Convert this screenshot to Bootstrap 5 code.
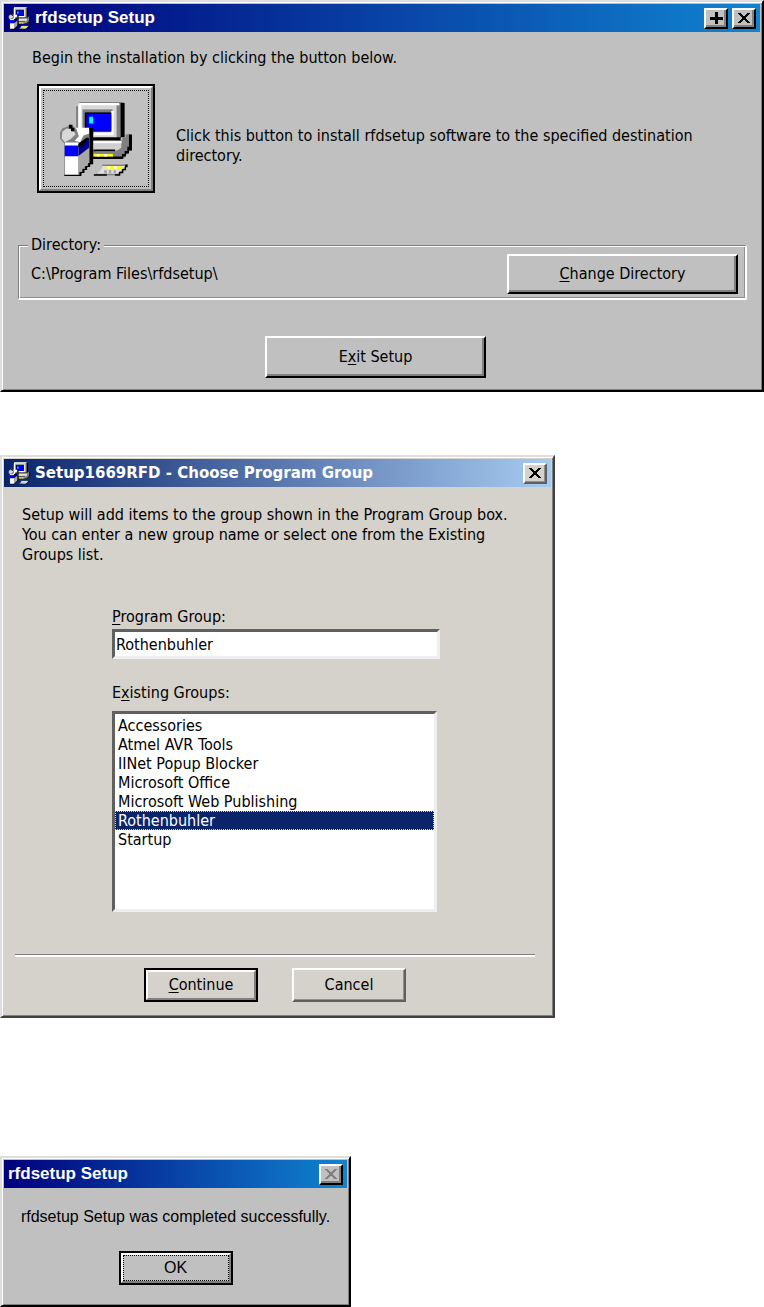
<!DOCTYPE html>
<html lang="en">
<head>
<meta charset="utf-8">
<meta name="viewport" content="width=device-width, initial-scale=1">
<title>rfdsetup Setup</title>
<link rel="stylesheet" href="https://cdn.jsdelivr.net/npm/bootstrap@5.3.0/dist/css/bootstrap.min.css">
<style>
  body { background: #fff; color: #000; font: 16px/20px "DejaVu Sans Condensed", "DejaVu Sans", sans-serif; }
  .dialog { background: var(--face); border: 2px solid; border-color: #dedede var(--dark) var(--dark) #dedede; box-shadow: inset 1px 1px #fff, inset -1px -1px #808080; padding: 2px; }
  .classic { --face: #c0c0c0; --dark: #000; --from: #00007b; --to: #1084d0; }
  .modern { --face: #d5d1cb; --dark: #404040; --from: #0a246a; --to: #a6caf0; max-width: 555px; margin-top: 63px; }
  .message { max-width: 351px; margin-top: 138px; font-family: "Liberation Sans", Arial, sans-serif; }
  .titlebar { height: 28px; background: linear-gradient(90deg, var(--from), var(--to)); color: #fff; padding: 0 4px; }
  .titlebar h1, .titlebar h2 { font: bold 17px/20px "Liberation Sans", Arial, sans-serif; margin: 0; }
  .modern .titlebar h2 { font: bold 15px/20px "DejaVu Sans", sans-serif; }
  .titlebar svg { display: block; }
  .push { background: var(--face); color: #000; border: 2px solid; border-color: #fff var(--dark) var(--dark) #fff; border-radius: 0; box-shadow: inset -2px -2px #808080; padding: 0; font: inherit; }
  .push:active { border-color: #000 #fff #fff #000; }
  .push:disabled { color: #808080; }
  .modern .push { border-color: #fff #606060 #606060 #fff; box-shadow: inset -1px -1px #909090; }
  .push.default, .modern .push.default { outline: 2px solid #000; outline-offset: -2px; border-width: 4px; border-color: #fff #808080 #808080 #fff; box-shadow: none; }
  .caption-btn { width: 24px; height: 21px; }
  .caption-btn svg { margin: auto; }
  .install-btn { width: 118px; height: 109px; padding: 2px; }
  .focus-box { border: 1px dotted #000; display: flex; align-items: center; justify-content: center; height: 100%; }
  .setup-body { padding: 16px 13px 10px 14px; }
  .setup-body > p { padding-left: 14px; }
  .install-row { gap: 21px; padding-left: 19px; margin-bottom: 42px; }
  .install-row p { padding-top: 14px; }
  .group-frame { border: solid; border-width: 1px 2px 2px 1px; border-color: #808080 #fff #fff #808080; box-shadow: inset 1px 1px #fff, inset -1px -1px #909090; padding: 0 7px 4px 12px; margin: 0; min-width: 0; }
  .group-frame legend { float: none; width: auto; font: inherit; margin: 0 0 -1px -3px; padding: 0 3px; background: var(--face); }
  .wide-btn { height: 40px; width: 231px; }
  .exit-btn { height: 42px; width: 221px; }
  .exit-row { padding: 36px 14px 0 0; }
  .small-btn { width: 114px; height: 34px; }
  .sunken { border: 3px solid; border-color: #606060 #eee #eee #606060; border-radius: 0; background: #fff; color: #000; font: inherit; }
  .group-body { padding: 18px 16px 12px 11px; }
  .group-body p { padding-left: 7px; margin-bottom: 42px; }
  .fields { padding-left: 97px; margin-bottom: 42px; }
  .fields label { padding-bottom: 2px; }
  .group-name { height: 30px; padding: 0 1px; width: 328px; max-width: 100%; }
  .group-list { height: 201px; width: 325px; max-width: 100%; padding: 2px 0 0; margin-top: 6px; overflow: hidden; outline: 0; }
  .group-list option { height: 19px; min-height: 0; line-height: 19px; padding: 0 3px; }
  .group-list option:checked { background: #0a246a linear-gradient(#0a246a, #0a246a); color: #fff; -webkit-text-fill-color: #fff; outline: 1px dotted #e0d890; outline-offset: -1px; }
  .rule { border-top: 1px solid #808080; border-bottom: 2px solid #fff; }
  .actions { gap: 34px; padding-top: 11px; }
  .message-body { padding: 19px 0 18px; }
  u { text-underline-offset: 2px; }
</style>
</head>
<body>
<svg class="d-none" aria-hidden="true">
  <symbol id="setup" viewBox="170 295 230 230">
    <path fill="#808080" d="M224 314h10v-13h132v16h-10v108h-14v-10H224z"/>
    <path fill="#d8d8d8" d="M230 306h124v103H230z"/>
    <path fill="#fff" d="M234 304h118v7H240v93h-9v-93z"/>
    <path fill="#808080" d="M345 311h14v96h-14z"/>
    <path fill="#000" d="M357 304h12v102h-12v10H270v-10h87z"/>
    <path fill="#808080" d="M243 323h90v74h-90z"/>
    <path fill="#fff" d="M329 328h7v72h-60v-9h53z"/>
    <path fill="#000" d="M250 332h79v57h-79z"/>
    <path fill="#00f" d="M255 336h74v51h-74z"/>
    <path fill="#0ff" d="M263 345h12v20h-12z"/>
    <path fill="#808080" d="M350 416h12v-10h10v-9h16v44l-20 27h-94v-52z"/>
    <path fill="#d0d0d0" d="M274 418h85v20l-12 8h-73z"/>
    <path fill="#fff" d="M276 418h84v6h-84z"/>
    <path fill="#000" d="M382 398h9v48h-9v9h-9v9h-8v7h-91v-7h87v-8h8v-9h8v-12h5zM276 443h64v5h-64z"/>
    <path fill="#808080" d="M284 448h55v8h-55z"/>
    <path fill="#ff0" d="M276 456h58v8h-58z"/>
    <path fill="#fff" d="M286 456h8v8h-8zM308 456h8v8h-8z"/>
    <path fill="#808080" d="M176 391l8-12 12-3 8-8 10 3 12 14h44v102l-20 16-14 18h-47v-96l-13-14z"/>
    <path fill="#d8d8d8" d="M183 389l13-9 17 4 10 13-14 14-19 10-9-12z"/>
    <path fill="#fff" d="M191 422h40v97h-40zM224 378h39v17l-17 6-10 20-16-4 12-14z"/>
    <path fill="#a8a8a8" d="M231 428l35-22v76l-21 17-9 20h-5z"/>
    <path fill="#00f" d="M190 431h40v32h-40z"/>
    <path fill="#000080" d="M231 430l32-22v30l-32 24z"/>
    <path fill="#000" d="M203 369h10v11h-10zM209 378h10v10h-10zM264 379h11v108h-9v8h-9v9h-8v9h-9v9h-51v-4h45v-8h9v-9h8v-9h9v-9h4zM237 421l18-13h7l-16 20-15 10v-12z"/>
    <path fill="#808080" d="M303 488h75l-12 20-17 12h-72l20-13z"/>
    <path fill="#e0e0e0" d="M302 492h69l-10 13-14 10h-62l13-11z"/>
    <path fill="#ff0" d="M311 494h56l-5 7h-51z"/>
    <path fill="#fff" d="M318 494h7v7h-7zM338 494h7v7h-7z"/>
    <path fill="#a0a0a0" d="M308 505h8v9h-8zM322 505h7v8h-7zM336 505h7v8h-7z"/>
    <path fill="#000" d="M371 488h7v8h-5v9h-8v9h-9v7h-16v-4h12v-8h9v-8h8zM277 517h39v4h-39z"/>
  </symbol>
  <symbol id="close" viewBox="0 0 14 12"><path fill="currentColor" d="M1 1h3v1h1v1h1v1h2V3h1V2h1V1h3v1h-1v1h-1v1h-1v1H9v2h1v1h1v1h1v1h1v1h-3v-1H9V9H8V8H6v1H5v1H4v1H1v-1h1V9h1V8h1V7h1V5H4V4H3V3H2V2H1z"/></symbol>
  <symbol id="plus" viewBox="0 0 14 12"><path fill="currentColor" d="M6 0h3v5h5v3H9v4H6V8H1V5h5z"/></symbol>
</svg>

<main class="d-flex flex-column align-items-start">
  <section class="dialog classic w-100">
    <header class="titlebar d-flex align-items-center">
      <svg width="23" height="24" class="me-1"><use href="#setup"/></svg>
      <h1 class="flex-grow-1">rfdsetup Setup</h1>
      <button class="push caption-btn me-1" aria-label="Add"><svg width="14" height="12"><use href="#plus"/></svg></button>
      <button class="push caption-btn" aria-label="Close"><svg width="14" height="12"><use href="#close"/></svg></button>
    </header>
    <div class="setup-body">
      <p class="mb-3">Begin the installation by clicking the button below.</p>
      <div class="install-row d-flex align-items-center">
        <button class="push default install-btn flex-shrink-0" aria-label="Install"><span class="focus-box"><svg width="77" height="77"><use href="#setup"/></svg></span></button>
        <p class="mb-0">Click this button to install rfdsetup software to the specified destination directory.</p>
      </div>
      <fieldset class="group-frame">
        <legend>Directory:</legend>
        <div class="d-flex justify-content-between align-items-center">
          <span>C:\Program Files\rfdsetup\</span>
          <button class="push wide-btn"><u>C</u>hange Directory</button>
        </div>
      </fieldset>
      <div class="exit-row text-center"><button class="push exit-btn">E<u>x</u>it Setup</button></div>
    </div>
  </section>

  <section class="dialog modern w-100">
    <header class="titlebar d-flex align-items-center">
      <svg width="23" height="24" class="me-1"><use href="#setup"/></svg>
      <h2 class="flex-grow-1">Setup1669RFD - Choose Program Group</h2>
      <button class="push caption-btn" aria-label="Close"><svg width="14" height="12"><use href="#close"/></svg></button>
    </header>
    <div class="group-body">
      <p>Setup will add items to the group shown in the Program Group box.<br>You can enter a new group name or select one from the Existing<br>Groups list.</p>
      <div class="fields">
        <label class="d-block" for="group"><u>P</u>rogram Group:</label>
        <input class="sunken group-name d-block mb-4" id="group" type="text" value="Rothenbuhler">
        <label class="d-block" for="groups">E<u>x</u>isting Groups:</label>
        <select class="sunken group-list d-block" id="groups" size="9">
          <option>Accessories</option>
          <option>Atmel AVR Tools</option>
          <option>IINet Popup Blocker</option>
          <option>Microsoft Office</option>
          <option>Microsoft Web Publishing</option>
          <option selected>Rothenbuhler</option>
          <option>Startup</option>
        </select>
      </div>
      <div class="rule"></div>
      <div class="actions d-flex justify-content-center">
        <button class="push default small-btn"><u>C</u>ontinue</button>
        <button class="push small-btn">Cancel</button>
      </div>
    </div>
  </section>

  <section class="dialog classic message w-100">
    <header class="titlebar d-flex align-items-center">
      <h2 class="flex-grow-1">rfdsetup Setup</h2>
      <button class="push caption-btn" aria-label="Close" disabled><svg width="14" height="12"><use href="#close"/></svg></button>
    </header>
    <div class="message-body text-center">
      <p class="mb-4">rfdsetup Setup was completed successfully.</p>
      <button class="push default small-btn d-block mx-auto"><span class="focus-box">OK</span></button>
    </div>
  </section>
</main>
<script src="https://cdn.jsdelivr.net/npm/bootstrap@5.3.0/dist/js/bootstrap.bundle.min.js"></script>
</body>
</html>
